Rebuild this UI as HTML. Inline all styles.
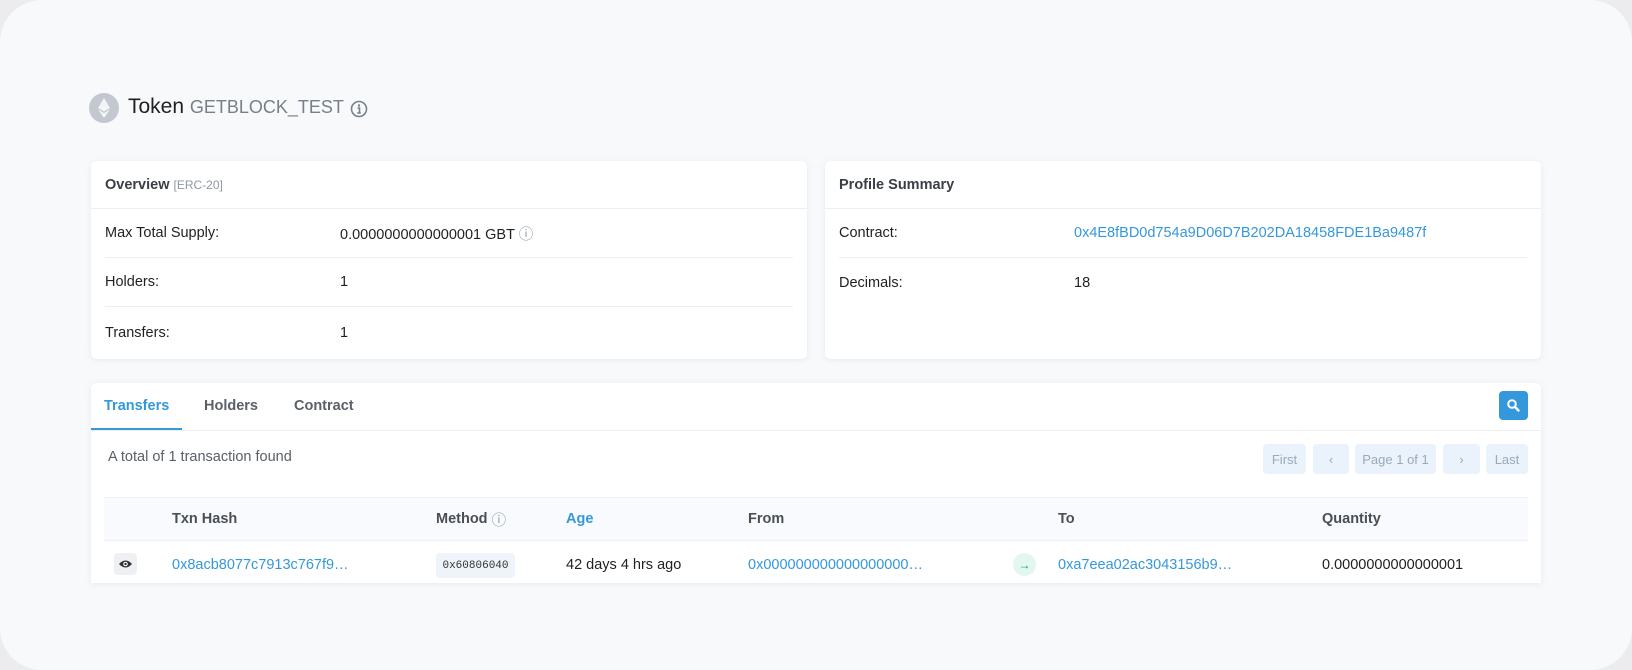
<!DOCTYPE html>
<html><head><meta charset="utf-8"><style>
*{box-sizing:border-box;margin:0;padding:0}
body{width:1632px;height:670px;background:#ececee;font-family:"Liberation Sans",Arial,sans-serif;font-size:14.5px;color:#1e2022;position:relative;overflow:hidden}
.frame{position:absolute;left:0;top:0;width:1632px;height:670px;background:#f8f9fb;border-radius:42px}
.abs{position:absolute}
.card{position:absolute;background:#fff;border-radius:6px;box-shadow:0 1px 6px rgba(180,190,210,.25)}
.hdr{height:48px;border-bottom:1px solid #edf0f3;padding:0 14px;display:flex;align-items:center;font-weight:bold;color:#3a3f45}
.row{position:absolute;left:14px;right:14px;height:49px;display:flex;align-items:center;border-bottom:1px solid #edf0f3}
.row.last{border-bottom:none}
.lbl{position:absolute;left:0}
.link{color:#3498db}
.pg{position:absolute;top:444px;height:30px;background:#eaf3fb;border-radius:4px;color:#9aa8b7;font-size:13px;display:flex;align-items:center;justify-content:center}
.th{position:absolute;top:497px;height:44px;display:flex;align-items:center;font-weight:bold;color:#4a4f55}
.td{position:absolute;top:544px;height:42px;display:flex;align-items:center}
</style></head><body>
<div class="frame"></div>
<div class="abs" style="left:89px;top:93px;width:30px;height:30px;border-radius:50%;background:#c3c8d0"></div>
<svg class="abs" style="left:96px;top:97px" width="16" height="22" viewBox="0 0 16 22"><path d="M8 1 L14 11 L8 14.5 L2 11Z" fill="#f3f4f6"/><path d="M8 16 L14 12.5 L8 21 L2 12.5Z" fill="#f3f4f6"/></svg>
<div class="abs" style="left:128px;top:95px;font-size:21px;color:#1e2022">Token <span style="font-size:18px;color:#77808a">GETBLOCK_TEST</span></div>
<svg class="abs" style="left:350px;top:100px" width="18" height="18" viewBox="0 0 18 18"><circle cx="9" cy="9" r="7.5" fill="none" stroke="#77808a" stroke-width="1.6"/><circle cx="9" cy="5.5" r="1.2" fill="#77808a"/><path d="M7.5 8h2v5M7.2 13h3.6" stroke="#77808a" stroke-width="1.6" fill="none"/></svg>

<div class="card" style="left:91px;top:161px;width:716px;height:198px">
<div class="hdr">Overview&nbsp;<span style="font-weight:normal;font-size:12px;color:#8c98a4">[ERC-20]</span></div>
<div class="row" style="top:48px"><span class="lbl">Max Total Supply:</span><span style="position:absolute;left:235px">0.0000000000000001 GBT <span style="color:#8c98a4">ⓘ</span></span></div>
<div class="row" style="top:97px"><span class="lbl">Holders:</span><span style="position:absolute;left:235px">1</span></div>
<div class="row last" style="top:146px;height:52px"><span class="lbl">Transfers:</span><span style="position:absolute;left:235px">1</span></div>
</div>

<div class="card" style="left:825px;top:161px;width:716px;height:198px">
<div class="hdr">Profile Summary</div>
<div class="row" style="top:48px"><span class="lbl">Contract:</span><span class="link" style="position:absolute;left:235px">0x4E8fBD0d754a9D06D7B202DA18458FDE1Ba9487f</span></div>
<div class="row last" style="top:97px"><span class="lbl">Decimals:</span><span style="position:absolute;left:235px">18</span></div>
</div>

<div class="card" style="left:91px;top:383px;width:1450px;height:200px;border-radius:6px 6px 0 0"></div>
<div class="abs" style="left:91px;top:430px;width:1450px;height:1px;background:#edf0f3"></div>
<div class="abs" style="left:91px;top:428px;width:91px;height:2px;background:#3498db"></div>
<div class="abs" style="left:104px;top:398px;font-weight:bold;color:#3498db">Transfers</div>
<div class="abs" style="left:204px;top:398px;font-weight:bold;color:#5a6068">Holders</div>
<div class="abs" style="left:294px;top:398px;font-weight:bold;color:#5a6068">Contract</div>
<div class="abs" style="left:1499px;top:391px;width:29px;height:29px;background:#3498db;border-radius:4px"></div>
<svg class="abs" style="left:1506px;top:398px" width="15" height="15" viewBox="0 0 15 15"><circle cx="6" cy="6" r="3.8" fill="none" stroke="#fff" stroke-width="2"/><path d="M9 9 L12.5 12.5" stroke="#fff" stroke-width="2.4" stroke-linecap="round"/></svg>
<div class="abs" style="left:108px;top:449px;color:#5a6068">A total of 1 transaction found</div>
<div class="pg" style="left:1263px;width:43px">First</div>
<div class="pg" style="left:1313px;width:36px">‹</div>
<div class="pg" style="left:1355px;width:81px">Page 1 of 1</div>
<div class="pg" style="left:1443px;width:37px">›</div>
<div class="pg" style="left:1486px;width:42px">Last</div>

<div class="abs" style="left:104px;top:497px;width:1424px;height:44px;background:#f8fafd;border-top:1px solid #eef1f5;border-bottom:1px solid #eef1f5"></div>
<div class="th" style="left:172px">Txn Hash</div>
<div class="th" style="left:436px">Method&nbsp;<span style="font-weight:normal;color:#8c98a4">ⓘ</span></div>
<div class="th" style="left:566px;color:#3498db">Age</div>
<div class="th" style="left:748px">From</div>
<div class="th" style="left:1058px">To</div>
<div class="th" style="left:1322px">Quantity</div>

<div class="abs" style="left:114px;top:553px;width:23px;height:22px;background:#eef0f3;border-radius:4px"></div>
<svg class="abs" style="left:118px;top:558px" width="15" height="12" viewBox="0 0 15 12"><path d="M1 6 Q7.5 -1 14 6 Q7.5 13 1 6Z" fill="#333"/><circle cx="7.5" cy="6" r="2.3" fill="#fff"/><circle cx="7.5" cy="6" r="1.2" fill="#333"/></svg>
<div class="td link" style="left:172px">0x8acb8077c7913c767f9…</div>
<div class="abs" style="left:436px;top:553px;width:79px;height:25px;background:#eef4fa;border-radius:4px;font-family:'Liberation Mono',monospace;font-size:11px;display:flex;align-items:center;justify-content:center;color:#333">0x60806040</div>
<div class="td" style="left:566px">42 days 4 hrs ago</div>
<div class="td link" style="left:748px">0x000000000000000000…</div>
<div class="abs" style="left:1013px;top:553px;width:23px;height:23px;border-radius:50%;background:#e3f6f0;color:#00a186;font-size:12px;font-weight:bold;display:flex;align-items:center;justify-content:center">→</div>
<div class="td link" style="left:1058px">0xa7eea02ac3043156b9…</div>
<div class="td" style="left:1322px">0.0000000000000001</div>
</body></html>
